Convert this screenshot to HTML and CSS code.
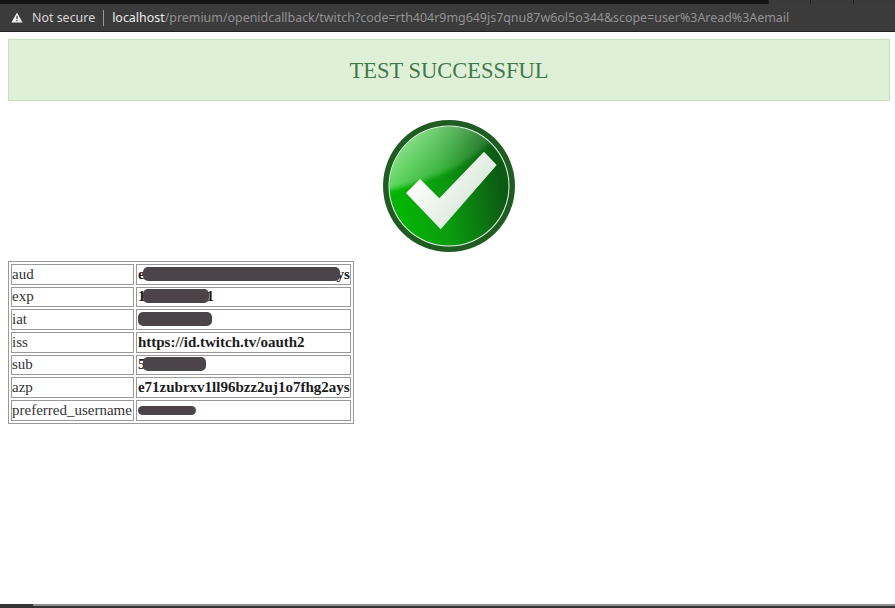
FILE: index.html
```html
<!DOCTYPE html>
<html lang="en">
<head>
  <meta charset="UTF-8">
  <title>Test Successful</title>
  <link rel="stylesheet" href="styles.css">
</head>
<body>

<!-- Browser chrome -->
<div class="top-strip">
  <div class="top-tabs"><span></span><span></span><span></span></div>
</div>
<div class="toolbar">
  <svg class="warn-icon" viewBox="0 0 12 11" width="12" height="11">
    <path d="M6 0.5 L11.6 10.5 L0.4 10.5 Z" fill="#eeeeee"/>
    <rect x="5.4" y="3.8" width="1.2" height="3.4" fill="#3a3a3a"/>
    <rect x="5.4" y="8" width="1.2" height="1.2" fill="#3a3a3a"/>
  </svg>
  <span class="not-secure">Not secure</span>
  <span class="divider"></span>
  <span class="url"><span class="host">localhost</span>/premium/openidcallback/twitch?code=rth404r9mg649js7qnu87w6ol5o344&amp;scope=user%3Aread%3Aemail</span>
</div>

<div class="page">
  <div class="alert-success">TEST SUCCESSFUL</div>

  <svg class="check-img" viewBox="0 0 132 132" width="132" height="132">
    <defs>
      <linearGradient id="baseGrad" x1="0.1" y1="0.7" x2="0.95" y2="0.55">
        <stop offset="0" stop-color="#04b404"/>
        <stop offset="0.45" stop-color="#0a9a0e"/>
        <stop offset="1" stop-color="#0c5a14"/>
      </linearGradient>
      <linearGradient id="glossGrad" x1="0.1" y1="0.2" x2="0.8" y2="0.7">
        <stop offset="0" stop-color="#d8ffd8" stop-opacity="0.75"/>
        <stop offset="1" stop-color="#d8ffd8" stop-opacity="0.08"/>
      </linearGradient>
      <linearGradient id="tickGrad" x1="0.1" y1="0.3" x2="0.9" y2="0.8">
        <stop offset="0" stop-color="#ffffff"/>
        <stop offset="1" stop-color="#d3e4d3"/>
      </linearGradient>
      <filter id="soft"><feGaussianBlur stdDeviation="2"/></filter>
      <clipPath id="faceClip"><circle cx="66" cy="66" r="59.5"/></clipPath>
    </defs>
    <circle cx="66" cy="66" r="66" fill="#1f5c22"/>
    <circle cx="66" cy="66" r="60.5" fill="#e8f4e8"/>
    <circle cx="66" cy="66" r="59.5" fill="url(#baseGrad)"/>
    <g clip-path="url(#faceClip)">
      <path d="M0 72 C35 62 75 55 112 18 L66 -10 L0 10 Z" fill="url(#glossGrad)" filter="url(#soft)"/>
    </g>
    <polygon points="23,73 37,59 56.3,78.3 101,31.7 113.7,45 57.7,109.3" fill="url(#tickGrad)"/>
  </svg>

  <table class="claims">
    <tr>
      <td>aud</td>
      <td class="val">e<span class="redact redact-aud"></span>ys</td>
    </tr>
    <tr>
      <td>exp</td>
      <td class="val">1<span class="redact redact-exp"></span>1</td>
    </tr>
    <tr>
      <td>iat</td>
      <td class="val"><span class="redact redact-iat"></span></td>
    </tr>
    <tr>
      <td>iss</td>
      <td class="val">https://id.twitch.tv/oauth2</td>
    </tr>
    <tr>
      <td>sub</td>
      <td class="val">5<span class="redact redact-sub"></span></td>
    </tr>
    <tr>
      <td>azp</td>
      <td class="val">e71zubrxv1ll96bzz2uj1o7fhg2ays</td>
    </tr>
    <tr>
      <td>preferred_username</td>
      <td class="val"><span class="redact redact-user"></span></td>
    </tr>
  </table>
</div>

<div class="bottom-bar"><div class="bottom-thumb"></div></div>

</body>
</html>
```

FILE: styles.css
```css
html, body {
  height: 100%;
}

body {
  margin: 0;
  display: flex;
  flex-direction: column;
  height: 608px;
  overflow: hidden;
  background: #fff;
  font-family: "Liberation Serif", serif;
}

.top-strip {
  height: 4px;
  background: #141414;
  display: flex;
  justify-content: flex-end;
}

.top-tabs {
  width: 127px;
  display: flex;
  background: #3a3a3a;
}

.top-tabs span {
  flex: 1;
  border-left: 1px solid #222;
}

.toolbar {
  height: 27px;
  background: #3b3b3b;
  border-bottom: 1px solid #222;
  display: flex;
  align-items: center;
  padding-left: 11px;
  font-family: "Noto Sans", sans-serif;
  font-size: 12.43px;
  white-space: nowrap;
}

.warn-icon {
  margin-right: 9px;
}

.not-secure {
  color: #d8d8d8;
}

.divider {
  width: 1px;
  height: 16px;
  background: #9a9a9a;
  margin: 0 8px 0 8px;
}

.url {
  color: #929292;
}

.host {
  color: #ececec;
}

.page {
  flex: 1;
  padding: 7px 5px 0 8px;
}

.alert-success {
  height: 62px;
  box-sizing: border-box;
  background-color: #dff0d8;
  border: 1px solid #c4e3b8;
  color: #44784a;
  font-size: 22.5px;
  line-height: 62px;
  text-align: center;
}

.check-img {
  display: block;
  margin: 19px auto 9px 375px;
}

.claims {
  border: 1px solid #999;
  border-spacing: 2px;
  font-size: 15px;
  color: #333;
}

.claims td {
  border: 1px solid #999;
  padding: 0 1px 0 0;
  height: 18.67px;
  line-height: 17px;
  white-space: nowrap;
}

.claims .val {
  padding: 0 0 0 1px;
  font-weight: bold;
  color: #1c1c1c;
}

.redact {
  display: inline-block;
  height: 14px;
  vertical-align: -2px;
  background: #4b4549;
  border-radius: 5px;
  filter: blur(0.6px);
}

.redact-aud {
  width: 197px;
  margin: 0 -3px 0 -2px;
}

.redact-exp {
  width: 66px;
  margin: 0 -3px 0 -2px;
}

.redact-iat {
  width: 74px;
}

.redact-sub {
  width: 63px;
  margin-left: -2px;
}

.redact-user {
  width: 58px;
  height: 9px;
  vertical-align: 0;
}

.bottom-bar {
  height: 4px;
  background: #8e8e8e;
  border-bottom: 2px solid #333;
  box-sizing: border-box;
}

.bottom-thumb {
  width: 33px;
  height: 4px;
  background: #333;
}
```
